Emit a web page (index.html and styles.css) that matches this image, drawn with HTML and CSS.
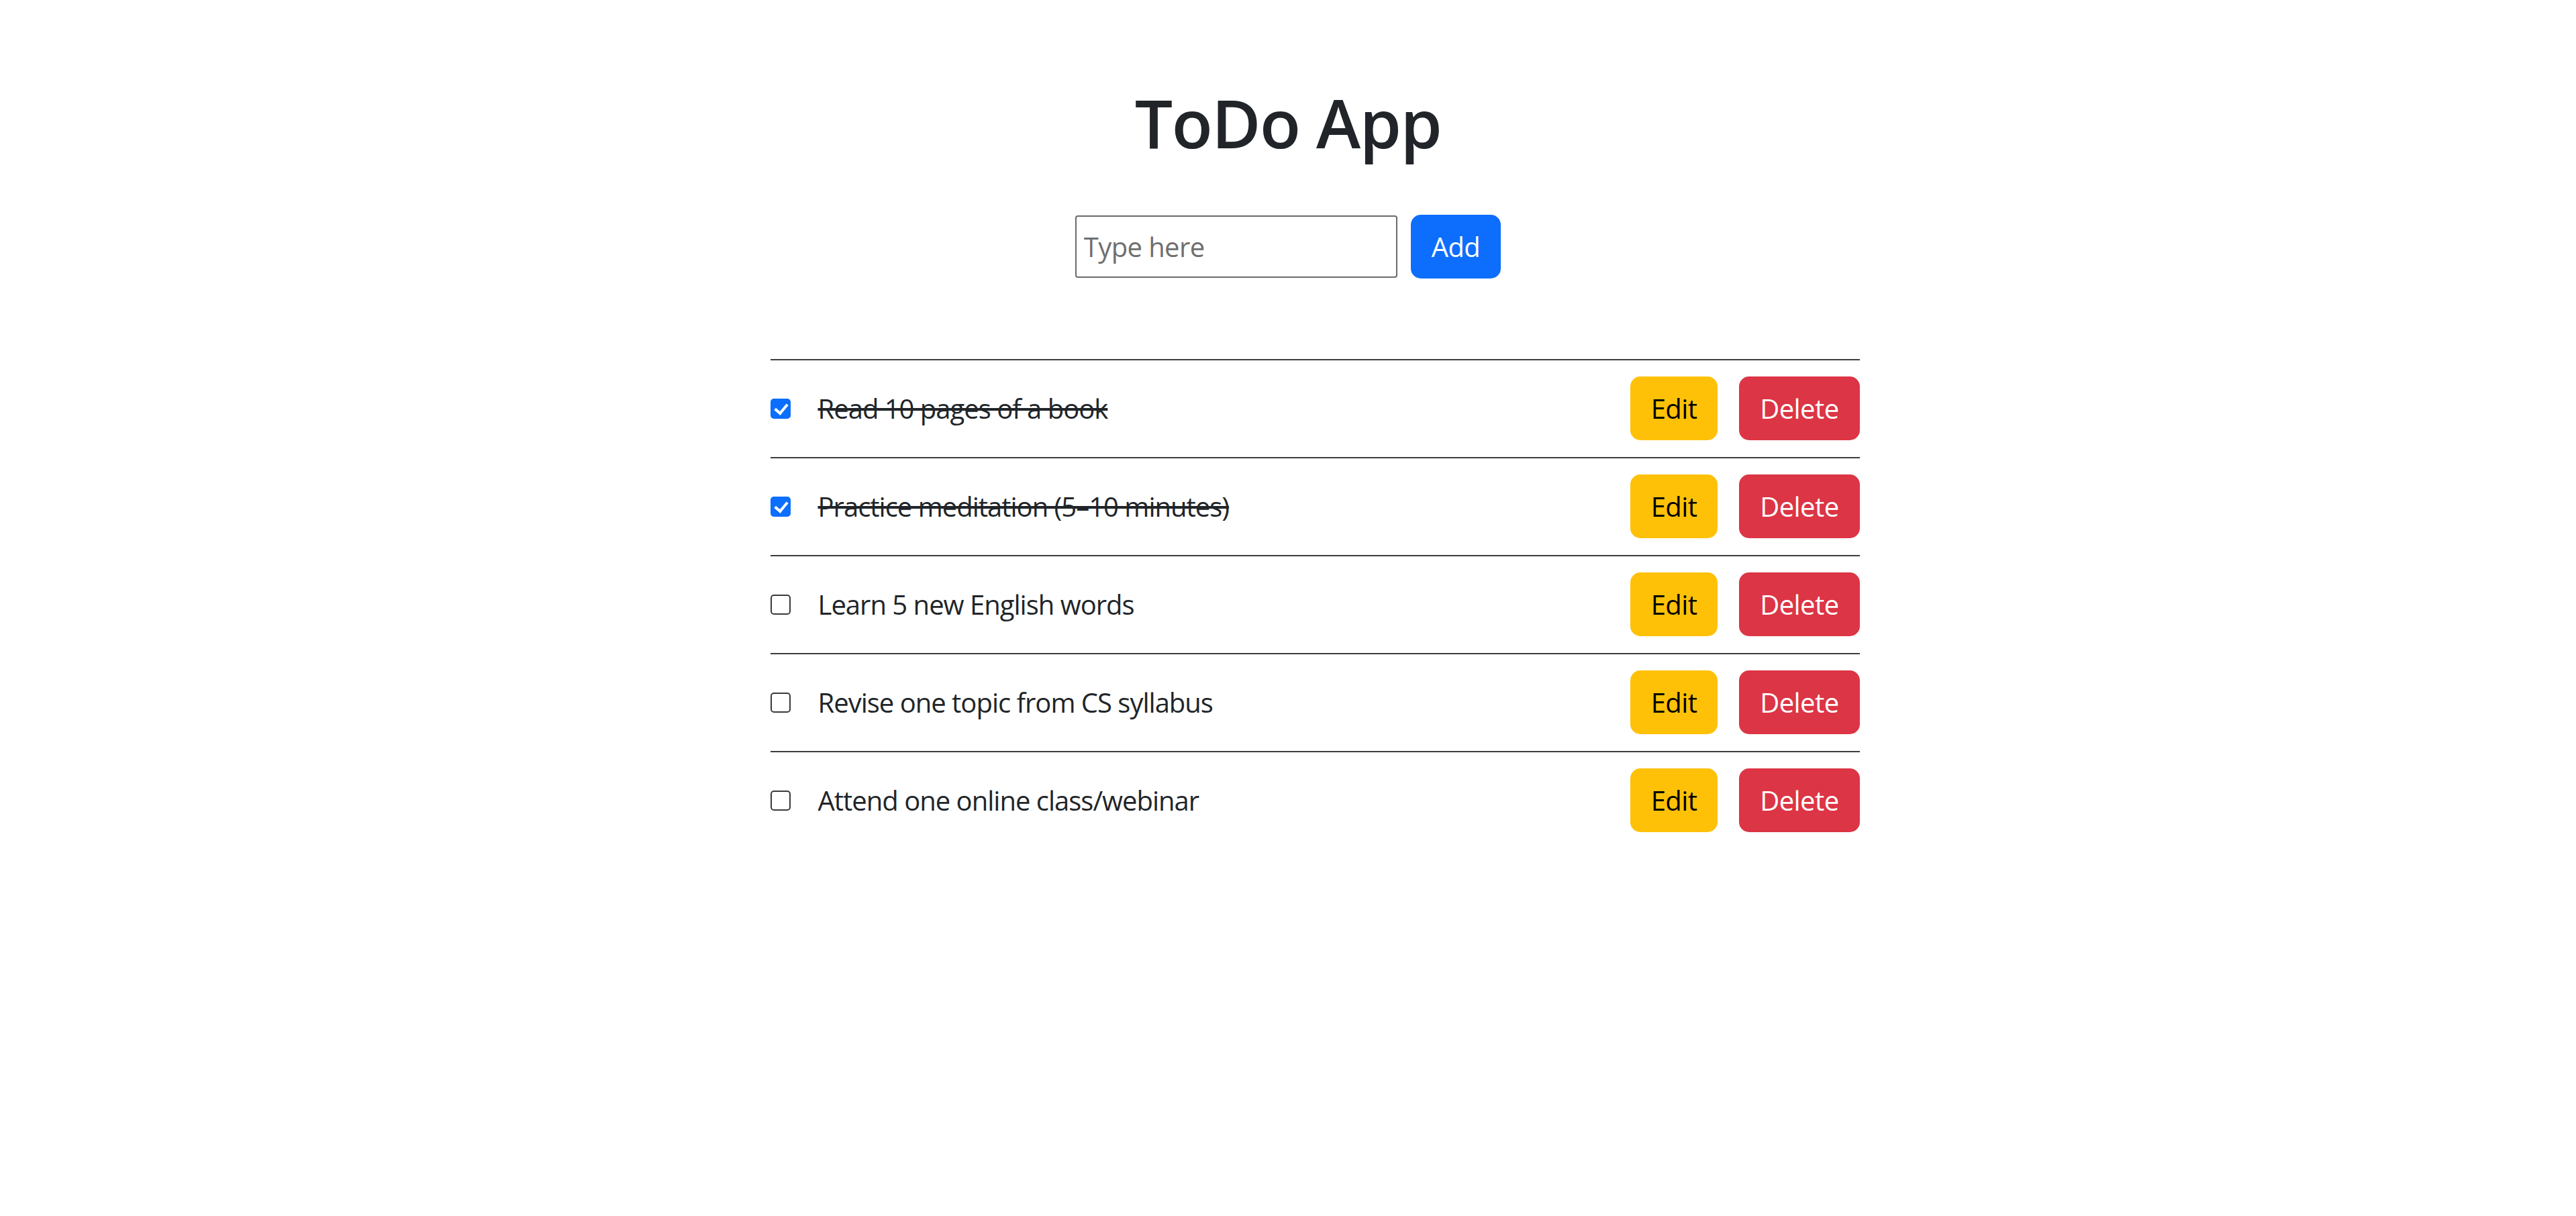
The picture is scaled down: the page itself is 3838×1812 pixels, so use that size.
FILE: index.html
```html
<!DOCTYPE html>
<html lang="en">
<head>
<meta charset="utf-8">
<title>ToDo App</title>
<link rel="stylesheet" href="styles.css">
</head>
<body>
<main class="app">
  <h1 class="title">ToDo App</h1>
  <form class="add-row">
    <input class="task-input" type="text" placeholder="Type here">
    <button class="btn btn-primary" type="button">Add</button>
  </form>
  <div class="list-wrap">
    <ul class="todo-list">
      <li class="todo-item done">
        <input class="check" type="checkbox" checked>
        <span class="todo-text">Read 10 pages of a book</span>
        <div class="actions">
          <button class="btn btn-warning" type="button">Edit</button>
          <button class="btn btn-danger" type="button">Delete</button>
        </div>
      </li>
      <li class="todo-item done">
        <input class="check" type="checkbox" checked>
        <span class="todo-text">Practice meditation (5–10 minutes)</span>
        <div class="actions">
          <button class="btn btn-warning" type="button">Edit</button>
          <button class="btn btn-danger" type="button">Delete</button>
        </div>
      </li>
      <li class="todo-item">
        <input class="check" type="checkbox">
        <span class="todo-text">Learn 5 new English words</span>
        <div class="actions">
          <button class="btn btn-warning" type="button">Edit</button>
          <button class="btn btn-danger" type="button">Delete</button>
        </div>
      </li>
      <li class="todo-item">
        <input class="check" type="checkbox">
        <span class="todo-text">Revise one topic from CS syllabus</span>
        <div class="actions">
          <button class="btn btn-warning" type="button">Edit</button>
          <button class="btn btn-danger" type="button">Delete</button>
        </div>
      </li>
      <li class="todo-item">
        <input class="check" type="checkbox">
        <span class="todo-text">Attend one online class/webinar</span>
        <div class="actions">
          <button class="btn btn-warning" type="button">Edit</button>
          <button class="btn btn-danger" type="button">Delete</button>
        </div>
      </li>
    </ul>
  </div>
</main>
</body>
</html>
```

FILE: styles.css
```css
* { box-sizing: border-box; }

html, body {
  margin: 0;
  padding: 0;
  background: #ffffff;
}

body {
  font-family: "Open Sans", "Noto Sans", sans-serif;
  font-size: 40px;
  color: #212529;
}

.app {
  padding-top: 122px;
  text-align: center;
}

.title {
  margin: 0 0 78px;
  font-size: 100px;
  line-height: 120px;
  font-weight: 600;
  letter-spacing: -1.5px;
  color: #212529;
}

.add-row {
  display: flex;
  justify-content: center;
  align-items: center;
  gap: 20px;
  margin: 0;
}

.task-input {
  width: 480px;
  height: 93px;
  padding: 0 11px;
  border: 2px solid #6b6b6b;
  border-radius: 4px;
  font-family: inherit;
  font-size: 40px;
  letter-spacing: -0.6px;
  color: #212529;
  background: #fff;
  outline: none;
}

.task-input::placeholder {
  color: #6f6f6f;
}

.btn {
  height: 95px;
  padding: 0 29px;
  border: 2px solid transparent;
  border-radius: 15px;
  font-family: inherit;
  font-size: 40px;
  letter-spacing: -0.6px;
  line-height: 1;
  cursor: pointer;
}

.btn-primary { background: #0d6efd; border-color: #0d6efd; color: #fff; }
.btn-warning { background: #ffc107; border-color: #ffc107; color: #000; }
.btn-danger  { background: #dc3545; border-color: #dc3545; color: #fff; }

.list-wrap {
  margin-top: 120px;
  display: flex;
  justify-content: center;
  padding-left: 80px;
}

.todo-list {
  width: 1623px;
  margin: 0;
  padding: 0;
  list-style: none;
  text-align: left;
}

.todo-item {
  display: flex;
  align-items: center;
  border-top: 2px solid #3d3d3d;
  padding: 24px 0 25px;
}

.check {
  appearance: none;
  -webkit-appearance: none;
  position: relative;
  flex: none;
  width: 30px;
  height: 30px;
  margin: 0;
  border: 2.5px solid #3a3a3a;
  border-radius: 5px;
  background: #fff;
}

.check:checked {
  background: #0b6efd;
  border-color: #0b6efd;
}

.check:checked::after {
  content: "";
  position: absolute;
  left: 8px;
  top: 2px;
  width: 8px;
  height: 15px;
  border-right: 4px solid #fff;
  border-bottom: 4px solid #fff;
  transform: rotate(40deg);
}

.todo-text {
  margin-left: 41px;
  flex: 1;
  line-height: 1.5;
  letter-spacing: -1px;
}

.done .todo-text {
  text-decoration: line-through;
}

.actions {
  display: flex;
  gap: 32px;
}
```
